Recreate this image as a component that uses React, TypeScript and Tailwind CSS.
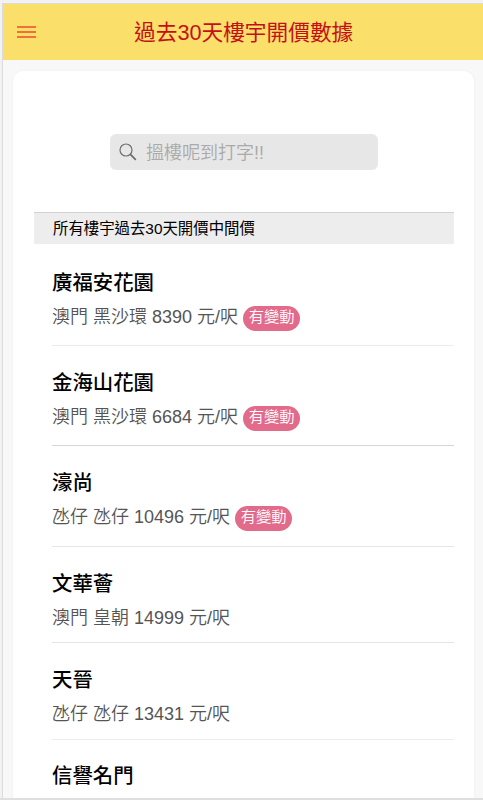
interface Listing {
  name: string
  area?: string
  price?: number
  changed?: boolean
  rowClass: string
}

const LISTINGS: Listing[] = [
  { name: '廣福安花園', area: '澳門 黑沙環', price: 8390, changed: true, rowClass: 'h-[102px] pt-[23px] border-b border-[#ececec]' },
  { name: '金海山花園', area: '澳門 黑沙環', price: 6684, changed: true, rowClass: 'h-[100px] pt-[21px] border-b border-[#d6d6d6]' },
  { name: '濠尚', area: '氹仔 氹仔', price: 10496, changed: true, rowClass: 'h-[101px] pt-[21px] border-b border-[#e6e6e6]' },
  { name: '文華薈', area: '澳門 皇朝', price: 14999, rowClass: 'h-[96px] pt-[21px] border-b border-[#e4e4e4]' },
  { name: '天晉', area: '氹仔 氹仔', price: 13431, rowClass: 'h-[97px] pt-[21px] border-b border-[#ececec]' },
  { name: '信譽名門', rowClass: 'pt-[20px]' },
]

function Header() {
  return (
    <header className="flex h-[56px] shrink-0 items-center bg-[#fadf6b]">
      <button type="button" aria-label="選單" className="ml-[14px] flex w-[19px] flex-col gap-[3px]">
        <span className="h-[2px] bg-[#f0703a]" />
        <span className="h-[2px] bg-[#f0703a]" />
        <span className="h-[2px] bg-[#f0703a]" />
      </button>
      <h1 className="mt-[2px] ml-[98px] text-[21.7px] leading-[32px] whitespace-nowrap text-[#c60f15]">
        過去30天樓宇開價數據
      </h1>
    </header>
  )
}

function SearchBox() {
  return (
    <div className="mt-[63px] ml-[97px] flex h-[36px] w-[268px] shrink-0 items-center rounded-[6px] bg-[#e7e7e7] pl-[9px]">
      <svg className="size-[18px] shrink-0" viewBox="0 0 18 18" fill="none" stroke="#6e6e6e">
        <circle cx="7" cy="7" r="6" strokeWidth="1.2" />
        <path d="M11.2 11.2 16.8 16.8" strokeWidth="1.8" />
      </svg>
      <span className="mt-[2px] ml-[9px] text-[18px] leading-[28px] font-[350] text-[#aaa]">
        搵樓呢到打字!!
      </span>
    </div>
  )
}

function ListingRow({ name, area, price, changed, rowClass }: Listing) {
  return (
    <li className={`shrink-0 ${rowClass}`}>
      <h2 className="text-[20.4px] leading-[32px] font-medium text-black">{name}</h2>
      {area && (
        <p className="mt-[3px] flex h-[30px] items-center text-[18px] font-[350] whitespace-nowrap text-[#555]">
          {area} {price} 元/呎
          {changed && (
            <span className="mt-[2px] ml-[5px] flex h-[25px] w-[57px] items-center justify-center rounded-full bg-[#e26a8b] pb-[2px] text-[15.3px] leading-[22px] text-white">
              有變動
            </span>
          )}
        </p>
      )}
    </li>
  )
}

export default function App() {
  return (
    <div className="flex h-[800px] w-[483px] flex-col overflow-hidden border-b-2 border-[#dfdfdf] bg-[#f2f2f2] pt-[3px] pl-[2px] font-['Liberation_Sans','Noto_Sans_CJK_TC',sans-serif]">
      <div className="flex min-h-0 flex-1 flex-col border-t border-l border-[#dcdcdc] bg-[#f8f8f8]">
        <Header />
        <main className="mt-[11px] mr-[9px] ml-[10px] flex min-h-0 flex-1 flex-col overflow-hidden rounded-t-[10px] bg-white shadow-[0_0_3px_rgba(0,0,0,0.05)]">
          <SearchBox />
          <div className="mt-[42px] mr-[20px] ml-[21px] h-[32px] shrink-0 border-t border-[#d2d2d2] bg-[#ededed] pl-[19px] text-[15.4px] leading-[32px] text-black">
            所有樓宇過去30天開價中間價
          </div>
          <ul className="mr-[20px] ml-[39px] flex flex-col">
            {LISTINGS.map((listing) => (
              <ListingRow key={listing.name} {...listing} />
            ))}
          </ul>
        </main>
      </div>
    </div>
  )
}
